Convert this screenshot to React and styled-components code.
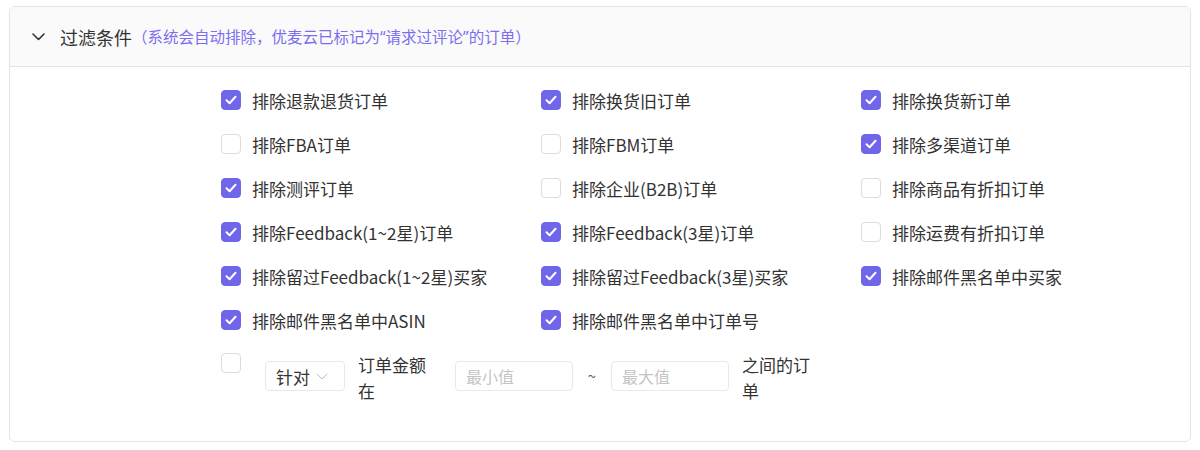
import React, { useState } from 'react';
import styled, { createGlobalStyle } from 'styled-components';

const GlobalStyle = createGlobalStyle`
  html, body {
    margin: 0;
    padding: 0;
    background: #ffffff;
  }
  body {
    font-family: "Noto Sans CJK SC", "Noto Sans", sans-serif;
    color: #333333;
  }
  * {
    box-sizing: border-box;
  }
`;

const options = [
  { label: '排除退款退货订单', checked: true },
  { label: '排除换货旧订单', checked: true },
  { label: '排除换货新订单', checked: true },
  { label: '排除FBA订单', checked: false },
  { label: '排除FBM订单', checked: false },
  { label: '排除多渠道订单', checked: true },
  { label: '排除测评订单', checked: true },
  { label: '排除企业(B2B)订单', checked: false },
  { label: '排除商品有折扣订单', checked: false },
  { label: '排除Feedback(1~2星)订单', checked: true },
  { label: '排除Feedback(3星)订单', checked: true },
  { label: '排除运费有折扣订单', checked: false },
  { label: '排除留过Feedback(1~2星)买家', checked: true },
  { label: '排除留过Feedback(3星)买家', checked: true },
  { label: '排除邮件黑名单中买家', checked: true },
  { label: '排除邮件黑名单中ASIN', checked: true },
  { label: '排除邮件黑名单中订单号', checked: true },
];

const Check = ({ checked, onClick }) => (
  <Box $checked={checked} onClick={onClick}>
    {checked && (
      <svg width="12" height="10" viewBox="0 0 12 10" fill="none">
        <path d="M1.5 5.2 L4.6 8.2 L10.5 1.8" stroke="#fff" strokeWidth="2" strokeLinecap="round" strokeLinejoin="round" />
      </svg>
    )}
  </Box>
);

const App = () => {
  const [items, setItems] = useState(options);
  const [amountOn, setAmountOn] = useState(false);

  const toggle = (i) => {
    setItems(items.map((it, idx) => (idx === i ? { ...it, checked: !it.checked } : it)));
  };

  return (
    <Page>
      <GlobalStyle />
      <Card>
        <Header>
          <svg width="13" height="8" viewBox="0 0 13 8" fill="none">
            <path d="M1 1 L6.5 6.5 L12 1" stroke="#333" strokeWidth="1.6" strokeLinecap="round" strokeLinejoin="round" />
          </svg>
          <Title>过滤条件</Title>
          <Hint>（系统会自动排除，优麦云已标记为“请求过评论”的订单）</Hint>
        </Header>
        <Body>
          <Grid>
            {items.map((it, i) => (
              <Option key={it.label}>
                <Check checked={it.checked} onClick={() => toggle(i)} />
                <Label>{it.label}</Label>
              </Option>
            ))}
          </Grid>
          <AmountRow>
            <Check checked={amountOn} onClick={() => setAmountOn(!amountOn)} />
            <Select>
              针对
              <svg width="12" height="7" viewBox="0 0 12 7" fill="none">
                <path d="M1 1 L6 6 L11 1" stroke="#bbb" strokeWidth="1" strokeLinecap="round" strokeLinejoin="round" />
              </svg>
            </Select>
            <Wrap $width={72} $gap={25}>订单金额在</Wrap>
            <Input placeholder="最小值" />
            <Tilde>~</Tilde>
            <Input placeholder="最大值" />
            <Wrap $width={70} $gap={0}>之间的订单</Wrap>
          </AmountRow>
        </Body>
      </Card>
    </Page>
  );
};

export default App;

const Page = styled.div`
  padding: 6px 9px 0 9px;
`;

const Card = styled.div`
  width: 1182px;
  height: 436px;
  border: 1px solid #e3e3e3;
  border-radius: 6px;
  overflow: hidden;
`;

const Header = styled.div`
  display: flex;
  align-items: center;
  height: 60px;
  padding: 0 0 0 22px;
  background-color: #fafafa;
  border-bottom: 1px solid #e3e3e3;
  svg {
    margin-right: 15px;
    margin-top: 1px;
  }
`;

const Title = styled.span`
  font-size: 18px;
  color: #333;
`;

const Hint = styled.span`
  font-family: "Noto Sans", "Noto Sans CJK SC", sans-serif;
  font-size: 15.5px;
  color: #7a6ff0;
`;

const Body = styled.div`
  padding: 21px 0 0 211px;
`;

const Grid = styled.div`
  display: grid;
  grid-template-columns: repeat(3, 320px);
  row-gap: 20px;
`;

const Option = styled.div`
  display: flex;
  align-items: center;
  height: 24px;
`;

const Box = styled.span`
  flex: none;
  display: inline-flex;
  align-items: center;
  justify-content: center;
  width: 20px;
  height: 20px;
  border-radius: 4px;
  cursor: pointer;
  background-color: ${(p) => (p.$checked ? '#7066ea' : '#fff')};
  border: 1px solid ${(p) => (p.$checked ? '#7066ea' : '#dcdcdc')};
`;

const Label = styled.span`
  margin-left: 11px;
  font-size: 17px;
  color: #333;
  white-space: nowrap;
`;

const AmountRow = styled.div`
  display: flex;
  align-items: flex-start;
  margin-top: 20px;
  > span:first-child {
    margin-top: 1px;
  }
`;

const Select = styled.div`
  display: flex;
  align-items: center;
  gap: 6px;
  width: 80px;
  height: 30px;
  margin: 9px 0 0 24px;
  padding: 0 10px;
  border: 1px solid #e8e8e8;
  border-radius: 4px;
  font-size: 17px;
  color: #333;
`;

const Wrap = styled.div`
  width: ${(p) => p.$width}px;
  margin-left: 13px;
  margin-right: ${(p) => p.$gap}px;
  font-size: 17px;
  line-height: 26px;
  color: #333;
`;

const Input = styled.input`
  width: 118px;
  height: 30px;
  margin-top: 9px;
  padding: 0 10px;
  border: 1px solid #e8e8e8;
  border-radius: 4px;
  font-family: "Noto Sans CJK SC", "Noto Sans", sans-serif;
  font-size: 16px;
  color: #333;
  outline: none;
  &::placeholder {
    color: #c4c4c4;
  }
`;

const Tilde = styled.span`
  width: 38px;
  margin-top: 13px;
  text-align: center;
  font-size: 15px;
  color: #555;
`;
